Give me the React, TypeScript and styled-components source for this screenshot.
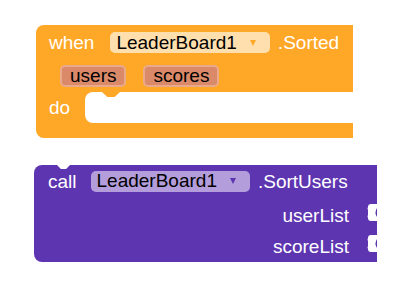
import styled, { createGlobalStyle } from "styled-components";

const GlobalStyle = createGlobalStyle`
  body {
    margin: 0;
    background: #ffffff;
    font-family: "Liberation Sans", Arial, sans-serif;
  }
`;

const ORANGE = "#ffa726";
const PURPLE = "#5e35b1";

const Canvas = styled.div`
  padding: 25px 0 0 36px;
  display: flex;
  flex-direction: column;
  align-items: flex-start;
`;

const EventBlock = styled.div`
  width: 317px;
  display: flex;
  flex-direction: column;
`;

const EventHead = styled.div`
  background: ${ORANGE};
  border-top-left-radius: 8px;
  padding: 7px 0 5px 13px;
  display: flex;
  flex-direction: column;
  gap: 12px;
`;

const Line = styled.div`
  display: flex;
  align-items: center;
  height: 21px;
`;

const Label = styled.span<{ $gap?: number }>`
  color: #ffffff;
  font-size: 19px;
  line-height: 21px;
  margin-right: ${(p) => p.$gap ?? 0}px;
`;

const Dropdown = styled.div<{ $bg: string; $arrow: string }>`
  display: flex;
  align-items: center;
  height: 21px;
  padding: 0 14px 0 6px;
  margin-right: 8px;
  border-radius: 5px;
  background: ${(p) => p.$bg};
  color: #000000;
  font-size: 19px;
  &::after {
    content: "";
    margin-left: 13px;
    border-left: 3.5px solid transparent;
    border-right: 3.5px solid transparent;
    border-top: 6px solid ${(p) => p.$arrow};
  }
`;

const Params = styled.div`
  display: flex;
  gap: 17px;
  padding-left: 11px;
`;

const Chip = styled.span`
  height: 22px;
  box-sizing: border-box;
  display: flex;
  align-items: center;
  padding: 0 8px;
  border: 2px solid #eaa98b;
  border-radius: 5px;
  background: #db8a69;
  color: #000000;
  font-size: 19px;
`;

const DoRow = styled.div`
  display: flex;
  height: 31px;
  background: ${ORANGE};
`;

const DoLabel = styled.span`
  width: 36px;
  padding-left: 13px;
  color: #ffffff;
  font-size: 19px;
  line-height: 31px;
`;

const Slot = styled.div`
  flex: 1;
  position: relative;
  background: #ffffff;
  border-radius: 8px 0 0 8px;
  &::before {
    content: "";
    position: absolute;
    left: 17px;
    top: 0;
    width: 18px;
    height: 5px;
    background: ${ORANGE};
    clip-path: polygon(0 0, 100% 0, 70% 100%, 30% 100%);
  }
`;

const EventFoot = styled.div`
  height: 15px;
  background: ${ORANGE};
  border-bottom-left-radius: 8px;
`;

const CallBlock = styled.div`
  position: relative;
  width: 343px;
  margin: 27px 0 0 -2px;
  padding-top: 5px;
  background: ${PURPLE};
  border-radius: 8px 0 0 8px;
  display: flex;
  flex-direction: column;
  &::before {
    content: "";
    position: absolute;
    left: 23px;
    top: 0;
    width: 13px;
    height: 4px;
    background: #ffffff;
    clip-path: polygon(0 0, 100% 0, 70% 100%, 30% 100%);
  }
  &::after {
    content: "";
    position: absolute;
    left: 19px;
    bottom: -5px;
    width: 19px;
    height: 5px;
    background: ${PURPLE};
    clip-path: polygon(0 0, 100% 0, 65% 100%, 35% 100%);
  }
`;

const CallLine = styled(Line)`
  height: 22px;
  padding-left: 14px;
  margin-bottom: 8px;
`;

const ArgRow = styled.div`
  position: relative;
  height: 31px;
  display: flex;
  align-items: center;
  justify-content: flex-end;
  padding-right: 28px;
`;

const Socket = styled.svg`
  position: absolute;
  right: 0;
  top: 4px;
`;

function SocketShape() {
  return (
    <Socket width="10" height="17" viewBox="0 0 10 17">
      <path
        d="M10 0 H4 Q1 0 1 3 Q0 5 1 6 V11 Q0 12 1 14 Q1 17 4 17 H10 V13 Q7 8.5 10 4 Z"
        fill="#ffffff"
      />
    </Socket>
  );
}

export default function App() {
  return (
    <>
      <GlobalStyle />
      <Canvas>
        <EventBlock>
          <EventHead>
            <Line>
              <Label $gap={16}>when</Label>
              <Dropdown $bg="#ffdfae" $arrow={ORANGE}>LeaderBoard1</Dropdown>
              <Label>.Sorted</Label>
            </Line>
            <Params>
              <Chip>users</Chip>
              <Chip>scores</Chip>
            </Params>
          </EventHead>
          <DoRow>
            <DoLabel>do</DoLabel>
            <Slot />
          </DoRow>
          <EventFoot />
        </EventBlock>

        <CallBlock>
          <CallLine>
            <Label $gap={14}>call</Label>
            <Dropdown $bg="#b39ddb" $arrow={PURPLE}>LeaderBoard1</Dropdown>
            <Label>.SortUsers</Label>
          </CallLine>
          <ArgRow>
            <Label>userList</Label>
            <SocketShape />
          </ArgRow>
          <ArgRow>
            <Label>scoreList</Label>
            <SocketShape />
          </ArgRow>
        </CallBlock>
      </Canvas>
    </>
  );
}
